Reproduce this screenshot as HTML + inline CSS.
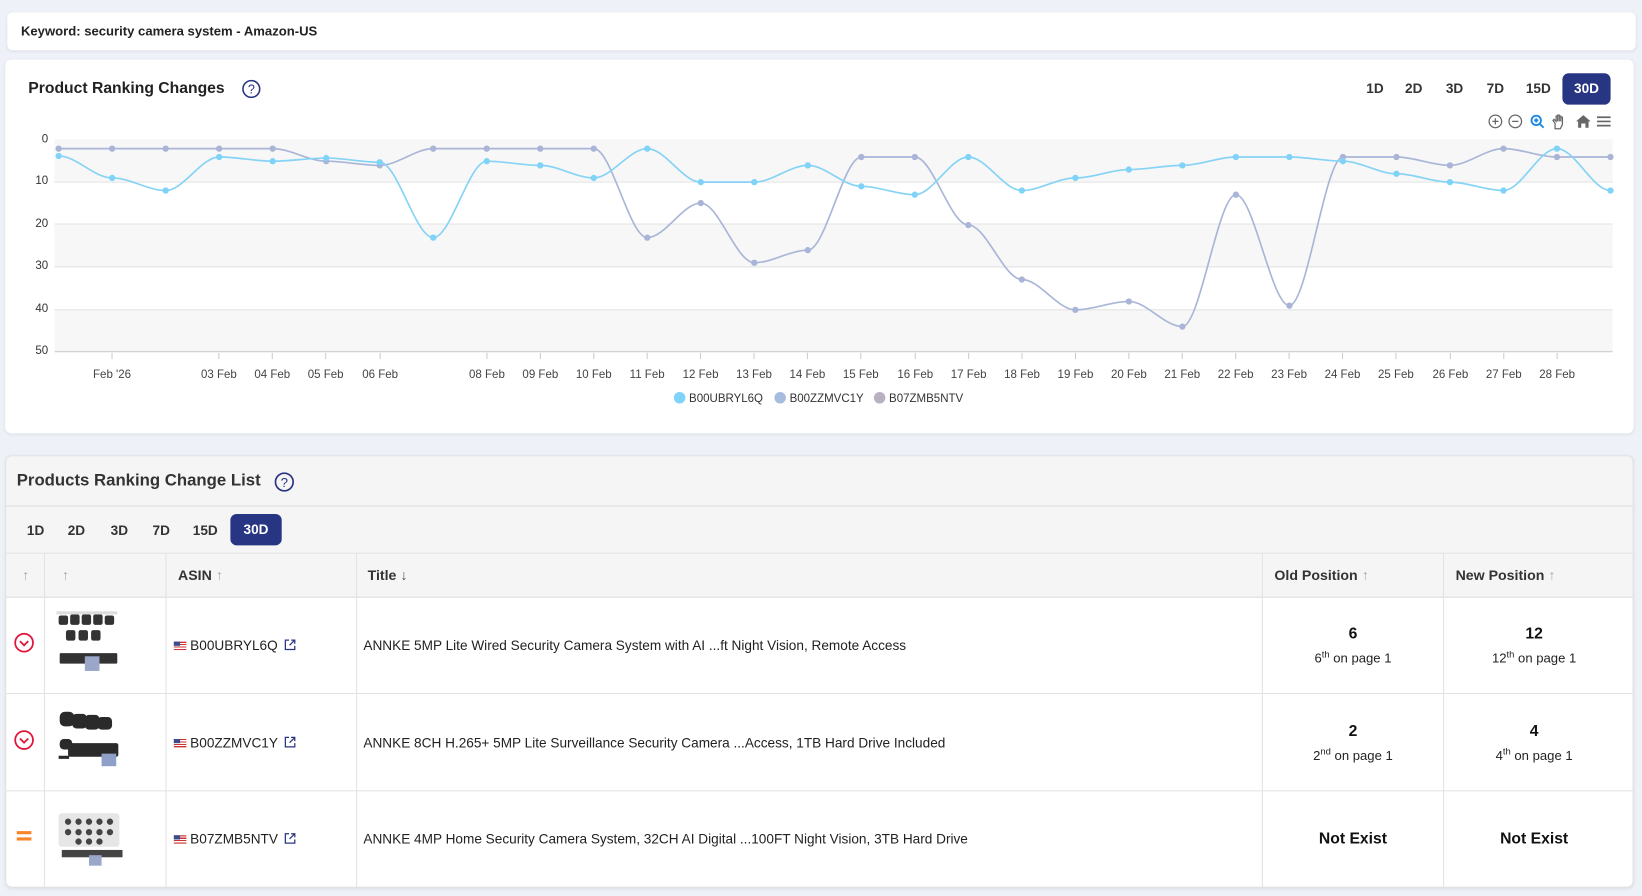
<!DOCTYPE html>
<html><head><meta charset="utf-8"><style>
*{box-sizing:border-box;margin:0;padding:0}
html,body{width:1642px;height:896px;overflow:hidden;background:#eef1f8;font-family:"Liberation Sans",Arial,sans-serif;color:#222}
#w{position:absolute;left:0;top:0;width:1568px;height:856px;transform:scale(1.04719,1.04673);transform-origin:0 0}
.card{position:absolute;background:#fff;border-radius:6px;box-shadow:0 1px 3px rgba(0,0,0,.08)}
.abs{position:absolute}
.tb{position:absolute;font-size:13px;font-weight:bold;color:#333;transform:translateX(-50%)}
.sel{position:absolute;background:#283583;color:#fff;border-radius:6px;font-weight:bold;font-size:13px;text-align:center}
.h{font-size:13.5px;font-weight:bold;color:#333;position:absolute}
.arr{color:#aaa;font-weight:normal}
.cell{position:absolute;font-size:13px;color:#222}
.pos{position:absolute;text-align:center;width:172px}
.pos b{display:block;font-size:15px;color:#111}
.pos span{display:block;font-size:12.5px;margin-top:6px;color:#222}
sup{font-size:9px}
</style></head><body><div id="w">
<div class="card" style="left:7px;top:12px;width:1555px;height:36px;border-radius:5px"><div class="abs" style="left:13px;top:11px;font-size:12.5px;font-weight:bold;color:#222">Keyword: security camera system - Amazon-US</div></div>

<div class="card" style="left:5px;top:57px;width:1555px;height:357px">
<div class="abs" style="left:22px;top:19px;font-size:15px;font-weight:bold;color:#222">Product Ranking Changes</div>
<svg class="abs" style="left:226px;top:19px" width="18" height="18" viewBox="0 0 18 18"><circle cx="9" cy="9" r="8" fill="none" stroke="#283583" stroke-width="1.5"/><text x="9" y="13.5" font-size="12" text-anchor="middle" fill="#283583" font-family="Liberation Sans">?</text></svg>
</div>
<div class="tb" style="left:1313px;top:77px">1D</div>
<div class="tb" style="left:1350px;top:77px">2D</div>
<div class="tb" style="left:1389px;top:77px">3D</div>
<div class="tb" style="left:1428px;top:77px">7D</div>
<div class="tb" style="left:1469px;top:77px">15D</div>
<div class="sel" style="left:1492px;top:70px;width:46px;height:30px;line-height:30px">30D</div>
<svg class="abs" style="left:1418px;top:107px" width="124" height="18" viewBox="0 0 124 18" fill="none" stroke="#666" stroke-width="1.2">
<circle cx="10" cy="9" r="6"/><path d="M7 9h6M10 6v6"/>
<circle cx="29" cy="9" r="6"/><path d="M26 9h6"/>
<g stroke="#1e88e5" stroke-width="1.8"><circle cx="49" cy="8" r="4.5"/><path d="M52 11l4 4M47 8h4M49 6v4"/></g>
<path d="M67 16v-5l-2-3 1-1 2 2V4h1.5v5V3h1.5v6V4h1.5v5V5h1.5v7l-2 4z"/>
<path d="M87 9l7-6 7 6h-2v6h-3v-4h-4v4h-3V9z" fill="#666" stroke="none"/>
<path d="M107 5h13M107 9h13M107 13h13" stroke-width="1.6"/>
</svg>

<svg class="abs" style="left:0;top:0" width="1568" height="420" font-family="Liberation Sans" font-size="11" fill="#333">
<rect x="52" y="133" width="1488" height="41" fill="#f7f7f7"/>
<rect x="52" y="214" width="1488" height="41" fill="#f7f7f7"/>
<rect x="52" y="296" width="1488" height="40" fill="#f7f7f7"/>
<g stroke="#e3e3e3"><path d="M52 174H1540M52 214H1540M52 255H1540M52 296H1540"/><path d="M52 336H1540" stroke="#ccc"/></g>
<g text-anchor="end"><text x="46" y="136">0</text><text x="46" y="176">10</text><text x="46" y="217">20</text><text x="46" y="257">30</text><text x="46" y="298">40</text><text x="46" y="338">50</text></g>
<g stroke="#ccc"><path d="M107 337v6M209 337v6M260 337v6M311 337v6M363 337v6M465 337v6M516 337v6M567 337v6M618 337v6M669 337v6M720 337v6M771 337v6M822 337v6M874 337v6M925 337v6M976 337v6M1027 337v6M1078 337v6M1129 337v6M1180 337v6M1231 337v6M1282 337v6M1333 337v6M1385 337v6M1436 337v6M1487 337v6"/></g>
<g text-anchor="middle" fill="#444"><text x="107" y="361">Feb '26</text><text x="209" y="361">03 Feb</text><text x="260" y="361">04 Feb</text><text x="311" y="361">05 Feb</text><text x="363" y="361">06 Feb</text><text x="465" y="361">08 Feb</text><text x="516" y="361">09 Feb</text><text x="567" y="361">10 Feb</text><text x="618" y="361">11 Feb</text><text x="669" y="361">12 Feb</text><text x="720" y="361">13 Feb</text><text x="771" y="361">14 Feb</text><text x="822" y="361">15 Feb</text><text x="874" y="361">16 Feb</text><text x="925" y="361">17 Feb</text><text x="976" y="361">18 Feb</text><text x="1027" y="361">19 Feb</text><text x="1078" y="361">20 Feb</text><text x="1129" y="361">21 Feb</text><text x="1180" y="361">22 Feb</text><text x="1231" y="361">23 Feb</text><text x="1282" y="361">24 Feb</text><text x="1333" y="361">25 Feb</text><text x="1385" y="361">26 Feb</text><text x="1436" y="361">27 Feb</text><text x="1487" y="361">28 Feb</text></g>
<path fill="none" stroke="#aab6d8" stroke-width="1.6" d="M56 142 C73 142 90 142 107.1 142 S141.2 142 158.2 142 S192.3 142 209.3 142 S243.4 142 260.4 142 S294.5 154 311.5 154 S345.6 158 362.6 158 S396.7 142 413.7 142 S447.8 142 464.8 142 S498.9 142 515.9 142 S550 142 567 142 S601.1 227 618.1 227 S652.2 194 669.2 194 S703.3 251 720.3 251 S754.4 239 771.4 239 S805.5 150 822.5 150 S856.6 150 873.6 150 S907.7 215 924.7 215 S958.8 267 975.8 267 S1009.9 296 1026.9 296 S1061 288 1078 288 S1112.1 312 1129.1 312 S1163.2 186 1180.2 186 S1214.3 292 1231.3 292 S1265.4 150 1282.4 150 S1316.5 150 1333.5 150 S1367.6 158 1384.6 158 S1418.7 142 1435.7 142 S1469.8 150 1486.8 150 S1520.9 150 1537.9 150"/>
<path fill="none" stroke="#86d3f6" stroke-width="1.6" d="M56 149 C73 149 90 170 107.1 170 S141.2 182 158.2 182 S192.3 150 209.3 150 S243.4 154 260.4 154 S294.5 151 311.5 151 S345.6 155 362.6 155 S396.7 227 413.7 227 S447.8 154 464.8 154 S498.9 158 515.9 158 S550 170 567 170 S601.1 142 618.1 142 S652.2 174 669.2 174 S703.3 174 720.3 174 S754.4 158 771.4 158 S805.5 178 822.5 178 S856.6 186 873.6 186 S907.7 150 924.7 150 S958.8 182 975.8 182 S1009.9 170 1026.9 170 S1061 162 1078 162 S1112.1 158 1129.1 158 S1163.2 150 1180.2 150 S1214.3 150 1231.3 150 S1265.4 154 1282.4 154 S1316.5 166 1333.5 166 S1367.6 174 1384.6 174 S1418.7 182 1435.7 182 S1469.8 142 1486.8 142 S1520.9 182 1537.9 182"/>
<g fill="#a9b4d6"><circle cx="56" cy="142" r="3"/><circle cx="107.1" cy="142" r="3"/><circle cx="158.2" cy="142" r="3"/><circle cx="209.3" cy="142" r="3"/><circle cx="260.4" cy="142" r="3"/><circle cx="311.5" cy="154" r="3"/><circle cx="362.6" cy="158" r="3"/><circle cx="413.7" cy="142" r="3"/><circle cx="464.8" cy="142" r="3"/><circle cx="515.9" cy="142" r="3"/><circle cx="567" cy="142" r="3"/><circle cx="618.1" cy="227" r="3"/><circle cx="669.2" cy="194" r="3"/><circle cx="720.3" cy="251" r="3"/><circle cx="771.4" cy="239" r="3"/><circle cx="822.5" cy="150" r="3"/><circle cx="873.6" cy="150" r="3"/><circle cx="924.7" cy="215" r="3"/><circle cx="975.8" cy="267" r="3"/><circle cx="1026.9" cy="296" r="3"/><circle cx="1078" cy="288" r="3"/><circle cx="1129.1" cy="312" r="3"/><circle cx="1180.2" cy="186" r="3"/><circle cx="1231.3" cy="292" r="3"/><circle cx="1282.4" cy="150" r="3"/><circle cx="1333.5" cy="150" r="3"/><circle cx="1384.6" cy="158" r="3"/><circle cx="1435.7" cy="142" r="3"/><circle cx="1486.8" cy="150" r="3"/><circle cx="1537.9" cy="150" r="3"/></g>
<g fill="#7fd2f8"><circle cx="56" cy="149" r="3"/><circle cx="107.1" cy="170" r="3"/><circle cx="158.2" cy="182" r="3"/><circle cx="209.3" cy="150" r="3"/><circle cx="260.4" cy="154" r="3"/><circle cx="311.5" cy="151" r="3"/><circle cx="362.6" cy="155" r="3"/><circle cx="413.7" cy="227" r="3"/><circle cx="464.8" cy="154" r="3"/><circle cx="515.9" cy="158" r="3"/><circle cx="567" cy="170" r="3"/><circle cx="618.1" cy="142" r="3"/><circle cx="669.2" cy="174" r="3"/><circle cx="720.3" cy="174" r="3"/><circle cx="771.4" cy="158" r="3"/><circle cx="822.5" cy="178" r="3"/><circle cx="873.6" cy="186" r="3"/><circle cx="924.7" cy="150" r="3"/><circle cx="975.8" cy="182" r="3"/><circle cx="1026.9" cy="170" r="3"/><circle cx="1078" cy="162" r="3"/><circle cx="1129.1" cy="158" r="3"/><circle cx="1180.2" cy="150" r="3"/><circle cx="1231.3" cy="150" r="3"/><circle cx="1282.4" cy="154" r="3"/><circle cx="1333.5" cy="166" r="3"/><circle cx="1384.6" cy="174" r="3"/><circle cx="1435.7" cy="182" r="3"/><circle cx="1486.8" cy="142" r="3"/><circle cx="1537.9" cy="182" r="3"/></g>
<g font-size="11" fill="#333"><circle cx="649" cy="380" r="5.5" fill="#7fd2f8"/><text x="658" y="384">B00UBRYL6Q</text><circle cx="745" cy="380" r="5.5" fill="#a7bde0"/><text x="754" y="384">B00ZZMVC1Y</text><circle cx="840" cy="380" r="5.5" fill="#b9b0c0"/><text x="849" y="384">B07ZMB5NTV</text></g>
</svg>

<div class="card" style="left:5px;top:435px;width:1555px;height:413px;overflow:hidden;border:1px solid #e2e2e2;border-radius:6px">
<div class="abs" style="left:0;top:0;width:100%;height:93px;background:#f5f5f6;border-bottom:1px solid #ddd"></div>
<div class="abs" style="left:0;top:47px;width:100%;height:1px;background:#ddd"></div>
<div class="abs" style="left:0;top:93px;width:100%;height:42px;background:#f5f5f6;border-bottom:1px solid #ddd"></div>
<div class="abs" style="left:10px;top:15px;font-size:16px;font-weight:bold;color:#333">Products Ranking Change List</div>
<svg class="abs" style="left:256px;top:15px" width="19" height="19" viewBox="0 0 18 18"><circle cx="9" cy="9" r="8" fill="none" stroke="#283583" stroke-width="1.5"/><text x="9" y="13.5" font-size="12" text-anchor="middle" fill="#283583" font-family="Liberation Sans">?</text></svg>
<div class="tb" style="left:28px;top:63px">1D</div>
<div class="tb" style="left:67px;top:63px">2D</div>
<div class="tb" style="left:108px;top:63px">3D</div>
<div class="tb" style="left:148px;top:63px">7D</div>
<div class="tb" style="left:190px;top:63px">15D</div>
<div class="sel" style="left:214px;top:55px;width:49px;height:30px;line-height:30px">30D</div>
<div class="abs" style="left:36px;top:93px;width:1px;height:320px;background:#e3e3e3"></div>
<div class="abs" style="left:152px;top:93px;width:1px;height:320px;background:#e3e3e3"></div>
<div class="abs" style="left:334px;top:93px;width:1px;height:320px;background:#e3e3e3"></div>
<div class="abs" style="left:1199px;top:93px;width:1px;height:320px;background:#e3e3e3"></div>
<div class="abs" style="left:1372px;top:93px;width:1px;height:320px;background:#e3e3e3"></div>
<div class="abs" style="left:0;top:226px;width:100%;height:1px;background:#e3e3e3"></div>
<div class="abs" style="left:0;top:319px;width:100%;height:1px;background:#e3e3e3"></div>
<div class="h arr" style="left:15px;top:106px">↑</div>
<div class="h arr" style="left:53px;top:106px">↑</div>
<div class="h" style="left:164px;top:106px">ASIN <span class="arr">↑</span></div>
<div class="h" style="left:345px;top:106px">Title <span style="color:#555">↓</span></div>
<div class="h" style="left:1211px;top:106px">Old Position <span class="arr">↑</span></div>
<div class="h" style="left:1384px;top:106px">New Position <span class="arr">↑</span></div>

<svg class="abs" style="left:7px;top:168px" width="20" height="20" viewBox="0 0 20 20"><circle cx="10" cy="10" r="8.5" fill="none" stroke="#e0163c" stroke-width="1.7"/><path d="M6 8.5l4 4 4-4" fill="none" stroke="#e0163c" stroke-width="1.7"/></svg>
<svg class="abs" style="left:7px;top:261px" width="20" height="20" viewBox="0 0 20 20"><circle cx="10" cy="10" r="8.5" fill="none" stroke="#e0163c" stroke-width="1.7"/><path d="M6 8.5l4 4 4-4" fill="none" stroke="#e0163c" stroke-width="1.7"/></svg>
<div class="abs" style="left:10px;top:358px;width:14px;height:3px;background:#f7862a"></div>
<div class="abs" style="left:10px;top:364px;width:14px;height:3px;background:#f7862a"></div>

<svg class="abs" style="left:45px;top:147px" width="70" height="62" viewBox="0 0 70 62"><g fill="#333"><rect x="5" y="5" width="9" height="9" rx="2"/><rect x="16" y="4" width="9" height="10" rx="2"/><rect x="27" y="4" width="9" height="10" rx="2"/><rect x="38" y="4" width="9" height="10" rx="2"/><rect x="49" y="5" width="9" height="9" rx="2"/><rect x="12" y="19" width="9" height="10" rx="2"/><rect x="24" y="19" width="9" height="10" rx="2"/><rect x="36" y="19" width="9" height="10" rx="2"/><rect x="6" y="41" width="55" height="10" rx="1"/></g><rect x="30" y="44" width="14" height="14" fill="#9aa7c8"/><g fill="#ddd"><rect x="3" y="1" width="58" height="3"/></g></svg>
<svg class="abs" style="left:45px;top:240px" width="70" height="62" viewBox="0 0 70 62"><g fill="#2a2a2a"><rect x="6" y="4" width="14" height="14" rx="5"/><rect x="18" y="6" width="14" height="14" rx="4"/><rect x="30" y="7" width="14" height="14" rx="4"/><rect x="42" y="9" width="14" height="12" rx="4"/><rect x="14" y="34" width="48" height="13" rx="2"/><rect x="6" y="30" width="12" height="10" rx="4"/><rect x="5" y="46" width="10" height="3"/></g><rect x="46" y="44" width="14" height="12" fill="#8fa0c8"/></svg>
<svg class="abs" style="left:45px;top:333px" width="70" height="62" viewBox="0 0 70 62"><g fill="#666"><rect x="5" y="8" width="58" height="32" rx="3" fill="#e6e6e6"/></g><g fill="#444"><circle cx="14" cy="16" r="3"/><circle cx="24" cy="16" r="3"/><circle cx="34" cy="16" r="3"/><circle cx="44" cy="16" r="3"/><circle cx="54" cy="16" r="3"/><circle cx="14" cy="26" r="3"/><circle cx="24" cy="26" r="3"/><circle cx="34" cy="26" r="3"/><circle cx="44" cy="26" r="3"/><circle cx="54" cy="26" r="3"/><circle cx="24" cy="35" r="3"/><circle cx="34" cy="35" r="3"/><circle cx="44" cy="35" r="3"/><rect x="8" y="43" width="58" height="7"/></g><rect x="34" y="48" width="12" height="10" fill="#9aa7c8"/></svg>

<div class="cell" style="left:160px;top:173px"><span style="display:inline-block;width:12px;height:8px;background:linear-gradient(#c33 0 14%,#fff 14% 28%,#c33 28% 42%,#fff 42% 57%,#c33 57% 71%,#fff 71% 85%,#c33 85%);position:relative;vertical-align:0"><span style="position:absolute;left:0;top:0;width:6px;height:4px;background:#3c4b8c"></span></span> B00UBRYL6Q <svg width="12" height="12" viewBox="0 0 12 12" style="vertical-align:-1px;margin-left:2px"><path d="M5 1.5H1.5v9h9V7M7 1.5h3.5V5M10.5 1.5L5.5 6.5" fill="none" stroke="#283583" stroke-width="1.2"/></svg></div>
<div class="cell" style="left:160px;top:266px"><span style="display:inline-block;width:12px;height:8px;background:linear-gradient(#c33 0 14%,#fff 14% 28%,#c33 28% 42%,#fff 42% 57%,#c33 57% 71%,#fff 71% 85%,#c33 85%);position:relative;vertical-align:0"><span style="position:absolute;left:0;top:0;width:6px;height:4px;background:#3c4b8c"></span></span> B00ZZMVC1Y <svg width="12" height="12" viewBox="0 0 12 12" style="vertical-align:-1px;margin-left:2px"><path d="M5 1.5H1.5v9h9V7M7 1.5h3.5V5M10.5 1.5L5.5 6.5" fill="none" stroke="#283583" stroke-width="1.2"/></svg></div>
<div class="cell" style="left:160px;top:358px"><span style="display:inline-block;width:12px;height:8px;background:linear-gradient(#c33 0 14%,#fff 14% 28%,#c33 28% 42%,#fff 42% 57%,#c33 57% 71%,#fff 71% 85%,#c33 85%);position:relative;vertical-align:0"><span style="position:absolute;left:0;top:0;width:6px;height:4px;background:#3c4b8c"></span></span> B07ZMB5NTV <svg width="12" height="12" viewBox="0 0 12 12" style="vertical-align:-1px;margin-left:2px"><path d="M5 1.5H1.5v9h9V7M7 1.5h3.5V5M10.5 1.5L5.5 6.5" fill="none" stroke="#283583" stroke-width="1.2"/></svg></div>

<div class="cell" style="left:341px;top:173px">ANNKE 5MP Lite Wired Security Camera System with AI ...ft Night Vision, Remote Access</div>
<div class="cell" style="left:341px;top:266px">ANNKE 8CH H.265+ 5MP Lite Surveillance Security Camera ...Access, 1TB Hard Drive Included</div>
<div class="cell" style="left:341px;top:358px">ANNKE 4MP Home Security Camera System, 32CH AI Digital ...100FT Night Vision, 3TB Hard Drive</div>

<div class="pos" style="left:1200px;top:161px"><b>6</b><span>6<sup>th</sup> on page 1</span></div>
<div class="pos" style="left:1373px;top:161px"><b>12</b><span>12<sup>th</sup> on page 1</span></div>
<div class="pos" style="left:1200px;top:254px"><b>2</b><span>2<sup>nd</sup> on page 1</span></div>
<div class="pos" style="left:1373px;top:254px"><b>4</b><span>4<sup>th</sup> on page 1</span></div>
<div class="pos" style="left:1200px;top:357px"><b>Not Exist</b></div>
<div class="pos" style="left:1373px;top:357px"><b>Not Exist</b></div>
</div>
</div></body></html>
